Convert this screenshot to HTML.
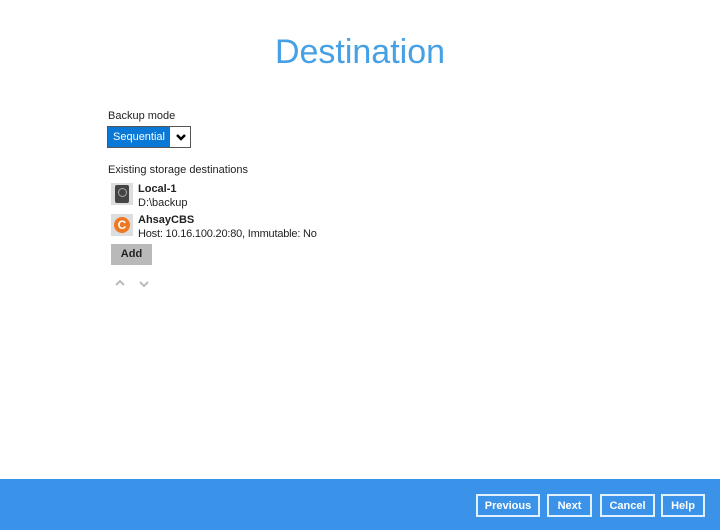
<!DOCTYPE html>
<html><head><style>
body{margin:0;width:720px;height:530px;position:relative;background:#fff;font-family:"Liberation Sans",sans-serif;overflow:hidden;color:#222}
.t{position:absolute;left:0;width:720px;text-align:center;top:33px;font-size:34px;color:#45a0e6;font-weight:normal}
.a{position:absolute;font-size:11px}
.b{font-weight:bold}
.ft{position:absolute;left:0;top:479px;width:720px;height:51px;background:#3a93e8}
.btn{position:absolute;top:494px;height:19px;border:2px solid #dff1ff;color:#fff;font-size:11px;font-weight:bold;text-align:center;line-height:20px;box-sizing:content-box}
</style></head><body>
<div class="t">Destination</div>
<div class="a" style="left:108px;top:110px">Backup mode</div>
<div style="position:absolute;left:107px;top:126px;width:84px;height:22px;border:1px solid #555;box-sizing:border-box;background:#fff">
<div style="position:absolute;left:0;top:0;width:62px;height:20px;background:#0a78d7;color:#fff;font-size:11px;line-height:21px;padding-left:5px;box-sizing:border-box">Sequential</div>
<svg style="position:absolute;left:67px;top:6px" width="12" height="9"><path d="M2 2 L6 6 L10 2" stroke="#000" stroke-width="2.5" fill="none"/></svg>
</div>
<div class="a" style="left:108px;top:164px">Existing storage destinations</div>
<div style="position:absolute;left:111px;top:183px;width:22px;height:22px;background:#ddd"><div style="position:absolute;left:4px;top:2px;width:14px;height:18px;background:#444;border-radius:2px"></div><div style="position:absolute;left:7px;top:5px;width:7px;height:7px;border:1px solid #aaa;border-radius:50%"></div></div>
<div class="a b" style="left:138px;top:183px">Local-1</div>
<div class="a" style="left:138px;top:197px">D:\backup</div>
<div style="position:absolute;left:111px;top:214px;width:22px;height:22px;background:#ddd"><div style="position:absolute;left:3px;top:3px;width:16px;height:16px;background:#f07820;border-radius:50%;color:#fff;font-weight:bold;font-size:12px;line-height:16px;text-align:center">C</div></div>
<div class="a b" style="left:138px;top:214px">AhsayCBS</div>
<div class="a" style="left:138px;top:228px;letter-spacing:-0.2px">Host: 10.16.100.20:80, Immutable: No</div>
<div style="position:absolute;left:111px;top:244px;width:41px;height:21px;background:#b9b9b9;font-size:11px;font-weight:bold;text-align:center;line-height:21px">Add</div>
<svg style="position:absolute;left:114px;top:278px" width="40" height="10"><path d="M2 7 L6 3 L10 7" stroke="#bbb" stroke-width="2" fill="none"/><path d="M26 4 L30 8 L34 4" stroke="#bbb" stroke-width="2" fill="none"/></svg>
<div class="ft"></div>
<div class="btn" style="left:476px;width:60px">Previous</div>
<div class="btn" style="left:547px;width:41px">Next</div>
<div class="btn" style="left:600px;width:51px">Cancel</div>
<div class="btn" style="left:661px;width:40px">Help</div>
</body></html>
